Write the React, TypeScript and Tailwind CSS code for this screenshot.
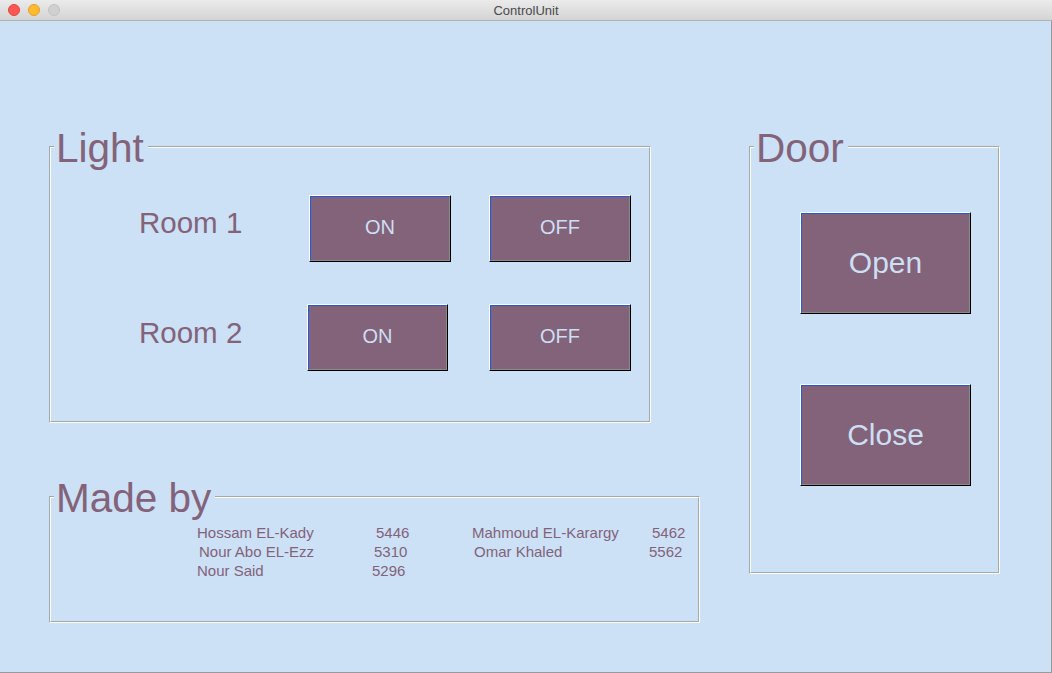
import type { ReactNode } from "react";

const font = { fontFamily: '"Liberation Sans", Arial, sans-serif' };

function Group({ title, className, children }: { title: string; className: string; children?: ReactNode }) {
  return (
    <div className={`relative border border-t-[#a3a8ae] border-l-[#a3a8ae] border-r-white border-b-white ${className}`}>
      <span className="absolute left-[4px] top-[-19px] z-10 bg-[#cce0f6] pl-[2px] pr-[4px] text-[40.5px] leading-none text-[#836379]">
        {title}
      </span>
      <div className="h-full w-full border border-t-white border-l-white border-r-[#a3a8ae] border-b-[#a3a8ae]">
        {children}
      </div>
    </div>
  );
}

function Btn({ label, className, text = "text-[20px] pb-[3px]" }: { label: string; className: string; text?: string }) {
  return (
    <button
      type="button"
      className={`border border-t-white border-l-white border-r-black border-b-black p-0 ${className}`}
    >
      <span
        className={`flex h-full w-full items-center justify-center border border-t-[#1f5bd8] border-l-[#1f5bd8] border-r-[#8a8a8a] border-b-[#8a8a8a] bg-[#836379] text-[#cddff3] ${text}`}
      >
        {label}
      </span>
    </button>
  );
}

export default function App() {
  return (
    <div className="flex h-[673px] w-[1052px] flex-col overflow-hidden bg-[#cce0f6]" style={font}>
      {/* title bar */}
      <div className="relative flex h-[21px] shrink-0 items-center justify-center border-b border-[#b1b1b1] bg-gradient-to-b from-[#ebebeb] to-[#d4d4d4]">
        <div className="absolute left-[8px] top-[4px] flex gap-[8px]">
          <span className="h-[12px] w-[12px] rounded-full border border-[#e2463f] bg-[#fd5754]" />
          <span className="h-[12px] w-[12px] rounded-full border border-[#e1a02a] bg-[#febb2e]" />
          <span className="h-[12px] w-[12px] rounded-full border border-[#c2c2c2] bg-[#d0d0d0]" />
        </div>
        <span className="text-[13px] leading-none text-[#4a4a4a]">ControlUnit</span>
      </div>

      {/* body */}
      <div className="flex flex-1 border-r border-b border-[#9a9a9a] pl-[49px] pt-[125px]">
        <div className="w-[700px]">
          <Group title="Light" className="h-[277px] w-[602px]">
            <div className="pt-[47px]">
              <div className="flex items-start">
                <span className="ml-[88px] mt-[13px] w-[170px] text-[29.5px] leading-none text-[#836379]">Room 1</span>
                <Btn label="ON" className="h-[67px] w-[142px]" />
                <Btn label="OFF" className="ml-[38px] h-[67px] w-[142px]" />
              </div>
              <div className="mt-[42px] flex items-start">
                <span className="ml-[88px] mt-[14px] w-[168px] text-[29.5px] leading-none text-[#836379]">Room 2</span>
                <Btn label="ON" className="h-[67px] w-[141px]" />
                <Btn label="OFF" className="ml-[41px] h-[67px] w-[142px]" />
              </div>
            </div>
          </Group>

          <Group title="Made by" className="mt-[73px] h-[127px] w-[651px]">
            <div className="pt-[25px] text-[15px] leading-[19px] text-[#836379]">
              <div className="flex">
                <span className="ml-[146px] w-[179px]">Hossam EL-Kady</span>
                <span className="w-[96px]">5446</span>
                <span className="w-[180px]">Mahmoud EL-Karargy</span>
                <span>5462</span>
              </div>
              <div className="flex">
                <span className="ml-[148px] w-[175px]">Nour Abo EL-Ezz</span>
                <span className="w-[100px]">5310</span>
                <span className="w-[175px]">Omar Khaled</span>
                <span>5562</span>
              </div>
              <div className="flex">
                <span className="ml-[146px] w-[175px]">Nour Said</span>
                <span>5296</span>
              </div>
            </div>
          </Group>
        </div>

        <Group title="Door" className="h-[428px] w-[251px]">
          <div className="flex flex-col pl-[49px] pt-[64px]">
            <Btn label="Open" className="h-[102px] w-[171px]" text="text-[30px] pb-[2px]" />
            <Btn label="Close" className="mt-[70px] h-[102px] w-[171px]" text="text-[30px] pb-[2px]" />
          </div>
        </Group>
      </div>
    </div>
  );
}
